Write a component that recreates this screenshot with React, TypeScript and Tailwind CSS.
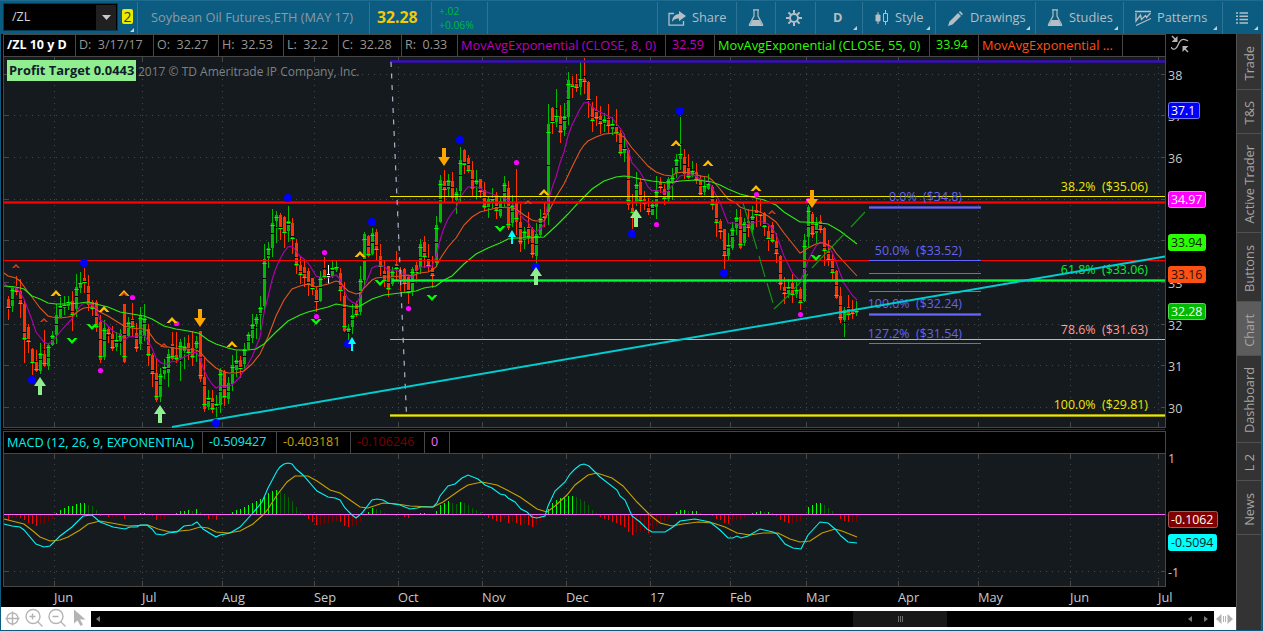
import type { ReactNode } from 'react';

// side, high, body top, body bottom, low (pixel rows), one candle every 4px
const CANDLES = `
r296,299,307,320 g286,288,306,312 r276,288,292,295 r279,291,304,318 r300,304,340,363 r324,327,342,353 r348,349,362,375 r350,361,371,372
g343,353,371,374 r330,354,366,367 g343,345,366,370 g331,335,345,346 g304,315,335,344 g297,306,317,318 g296,305,308,315 g296,302,306,310
r291,301,315,331 g274,287,309,317 g272,283,288,293 r268,278,282,293 r275,286,305,311 r300,302,308,316 r300,302,328,332 r315,322,360,363
g320,328,357,360 r326,329,333,343 r326,334,349,351 g332,340,347,351 g329,334,341,355 r304,304,362,363 g317,322,336,337 r303,319,327,336
r323,333,349,352 g307,315,344,350 g304,318,336,341 r324,329,356,366 r353,355,374,387 r358,373,400,402 g368,374,397,402 g359,367,374,379
g349,354,373,387 r332,344,359,360 r332,355,360,363 g339,342,358,381 g337,346,351,369 r335,343,353,360 r331,348,358,366 g336,341,348,362
r331,331,379,382 r358,377,409,412 g390,398,407,410 r390,398,410,413 g395,404,407,417 g368,370,405,413 r370,372,398,406 g377,383,399,404
g355,365,384,391 g351,360,370,377 r356,360,368,378 g343,349,364,369 g332,334,349,350 g314,324,338,343 g314,317,324,339 g296,307,315,330
g244,259,306,311 g242,248,258,268 g209,223,248,257 g211,215,221,243 r213,215,228,240 r216,217,232,248 g206,221,231,242 r218,223,238,254
r239,243,266,274 r257,265,275,284 r259,267,278,287 r268,271,284,296 r278,278,288,295 r287,290,301,312 g271,277,301,302 r257,270,278,279
w265,274,277,284 g261,268,276,278 g261,267,270,272 r268,273,291,301 r282,296,331,332 g324,328,333,340 g304,315,327,334 r301,304,315,317
g266,279,312,315 g232,234,280,285 r235,236,256,257 g228,233,254,255 r229,232,250,260 r244,256,267,276 r261,271,281,287 r266,266,290,297
g267,271,284,286 r251,264,269,280 r267,270,280,291 r268,269,284,292 r275,277,292,304 g267,269,291,296 r262,265,272,279 g239,244,267,274
r236,242,257,268 r244,258,267,271 r256,268,276,288 g216,225,263,267 g175,180,222,223 r170,181,190,202 g174,180,189,197 r172,181,198,202
g188,192,200,214 g147,160,191,202 r149,150,164,174 r155,158,171,173 r161,170,189,196 g170,180,184,199 r179,179,192,198 r182,190,208,211
g196,199,208,218 g188,199,202,208 r192,195,211,219 g198,201,216,218 g176,183,203,207 r181,188,228,230 g195,205,223,227 r169,202,222,235
r204,222,244,252 g227,231,240,249 r212,227,238,244 r227,229,255,258 g223,234,256,264 g209,218,235,237 r203,213,217,227 g104,124,212,225
r107,108,122,134 g89,118,122,127 r105,116,133,143 g103,116,130,136 g72,80,117,125 r76,84,86,98 r74,84,88,92 g62,79,87,95
r58,79,82,94 r81,82,99,118 r102,107,121,132 r96,110,119,126 r106,116,124,134 g113,119,123,132 r104,118,126,133 g117,124,129,135
r109,126,133,142 r130,133,154,156 g134,149,153,162 r148,150,205,210 r194,208,212,229 g172,184,202,206 r178,182,201,212 r191,199,203,210
r198,207,212,215 g200,204,215,215 g176,190,207,219 r177,182,188,193 r184,189,199,205 g177,179,199,203 g168,176,183,200 g154,159,173,178
g117,156,159,170 r149,157,174,179 r154,167,178,179 g161,172,176,177 r163,172,180,184 r175,179,195,195 g177,186,192,195 g174,184,189,190
r185,187,205,210 r199,202,223,237 r219,221,231,239 r229,229,256,270 g233,245,256,260 g222,228,248,250 g209,217,228,235 r209,217,248,249
g218,222,243,246 r209,221,228,237 g206,216,230,234 r198,210,214,227 r200,214,216,226 r212,213,227,236 r226,231,238,251 r222,225,242,243
r233,241,254,263 r255,256,285,290 r277,287,294,304 g279,287,294,298 r274,283,295,303 g282,290,294,298 r287,289,303,310 g234,240,301,302
g205,207,237,247 r212,214,235,238 g217,223,233,243 r215,221,230,233 r227,228,251,266 r240,251,260,266 r254,259,273,281 r270,271,298,299
r287,296,320,323 g307,310,320,337 r295,307,315,320 r300,310,314,319 g301,311,313,316`
  .trim()
  .split(/\s+/)
  .map((c) => ({ side: c[0], v: c.slice(1).split(',').map(Number) }));

const EMA8 =
  '4,283 8,287 16,288 20,292 24,299 32,320 36,332 40,337 44,342 48,344 52,342 60,332 68,323 72,319 76,313 80,306 84,303 88,303 92,305 96,308 100,320 104,322 108,326 112,330 116,333 120,334 124,340 128,337 136,336 144,335 148,341 152,348 156,358 160,362 164,364 168,364 172,361 176,362 180,359 188,355 196,352 200,358 204,370 208,378 212,384 216,388 220,386 224,387 232,385 236,381 240,377 244,370 248,364 252,357 256,347 260,337 264,313 268,297 272,280 276,268 280,259 284,252 288,247 292,246 296,251 300,256 304,259 308,263 312,269 316,276 320,277 328,278 336,275 340,279 344,290 348,299 352,302 356,304 360,297 364,287 368,278 372,268 376,266 384,266 388,270 396,270 400,272 408,276 412,277 416,272 420,267 424,267 432,266 436,257 440,240 444,228 448,219 452,213 456,208 460,198 464,192 468,187 472,187 476,187 480,188 484,191 492,194 500,197 504,198 508,200 512,203 516,209 520,215 524,219 528,222 532,229 536,232 540,229 544,225 548,202 552,188 556,177 560,163 564,152 568,136 572,125 576,117 580,109 584,103 588,102 592,107 596,110 600,112 604,114 608,116 612,118 616,123 620,128 624,134 628,149 632,163 636,167 640,172 644,179 648,187 652,191 656,190 660,191 664,193 668,191 672,186 676,181 680,176 684,175 692,175 696,176 700,179 704,181 708,181 712,187 716,195 720,202 724,213 728,223 736,223 740,226 744,226 748,224 752,223 760,221 768,224 772,228 776,234 780,245 784,256 788,264 792,272 796,277 800,281 804,273 808,261 812,253 816,246 820,242 824,243 828,246 832,252 836,262 840,273 844,283 848,289 852,295 857,300';

const EMA21 =
  '4,273 8,276 16,278 20,281 28,292 32,297 40,308 48,316 52,317 60,318 68,317 72,316 80,310 84,308 92,307 96,309 100,312 108,316 116,321 124,326 132,328 140,329 144,329 148,331 156,342 164,347 168,347 180,349 188,349 196,350 200,352 208,361 216,368 220,370 228,373 236,373 244,371 252,364 260,354 268,337 276,316 284,300 292,289 300,286 308,284 316,287 320,286 328,284 336,281 340,282 344,287 348,291 356,294 360,293 364,288 372,280 376,278 384,277 392,277 408,275 412,276 420,273 428,272 432,270 436,267 440,259 448,247 456,238 464,225 472,217 480,212 488,210 496,208 508,207 512,208 516,209 520,212 524,215 532,220 536,221 544,221 548,213 556,197 564,184 572,167 580,151 584,145 588,141 596,137 604,134 616,133 624,137 632,148 640,157 648,166 656,172 664,175 672,176 676,173 684,172 696,174 700,176 708,177 712,180 720,189 728,199 736,203 740,207 748,210 756,211 760,212 768,216 776,222 784,233 792,243 800,253 804,251 808,248 816,244 820,243 824,243 832,247 836,253 844,262 857,276';

const EMA55 =
  '4,286 16,287 24,289 32,296 40,299 48,303 56,304 68,304 80,303 88,302 96,304 108,307 120,312 132,314 144,316 152,319 164,326 176,329 188,331 198,333 200,334 208,340 216,344 228,348 236,350 248,350 256,349 264,344 276,332 288,321 300,315 308,312 316,310 328,307 336,304 348,306 356,307 360,306 372,299 384,295 400,293 416,291 424,288 436,286 444,280 452,276 464,264 476,254 488,248 500,243 508,239 516,238 528,238 544,237 556,226 568,214 580,201 592,189 604,181 616,177 624,176 632,177 640,179 652,181 668,183 680,181 696,180 712,182 720,185 728,189 740,194 752,197 764,200 776,205 784,212 792,217 800,222 804,222 820,223 828,224 840,231 857,244';

const MACD =
  '4,524 12,526 20,527 24,530 36,544 44,547 50,546 60,536 72,527 83,516 92,515 100,522 108,525 113,527 125,529 130,527 137,527 140,525 147,525 152,529 156,534 163,535 168,533 177,532 184,526 192,525 197,522 203,529 216,537 220,535 230,533 240,527 252,514 262,502 268,488 277,471 280,467 284,464 288,463 292,464 296,469 303,475 317,491 328,497 335,498 340,500 345,508 352,515 356,518 362,513 372,500 377,499 383,500 388,503 400,505 410,509 417,508 421,507 433,507 437,503 440,496 448,486 455,484 462,478 468,475 478,479 485,485 492,488 500,494 505,495 508,498 515,502 521,509 527,512 532,517 537,518 545,516 548,506 555,491 565,482 570,474 575,469 580,465 584,464 589,466 600,477 617,490 620,496 625,500 632,516 640,522 647,529 652,532 665,532 673,527 680,521 695,519 710,522 720,530 728,538 733,538 737,536 741,538 748,536 760,529 773,532 777,534 785,544 793,548 801,549 808,535 820,522 828,523 835,529 841,536 848,542 857,543';

const SIGNAL =
  '4,519 24,524 33,531 40,537 50,541 60,540 68,537 80,530 88,524 100,521 117,524 128,526 148,525 158,529 170,532 190,530 200,527 208,528 216,532 228,533 240,531 253,524 263,515 268,509 277,495 287,482 295,476 308,476 317,481 330,490 340,493 350,500 360,507 368,508 383,503 397,504 410,506 433,507 443,502 460,490 468,485 482,482 497,485 507,490 520,497 537,509 547,512 555,506 567,495 575,485 588,475 597,473 612,478 623,486 637,502 650,515 660,523 672,526 683,524 698,522 713,523 725,527 737,533 750,535 763,533 778,533 790,539 800,542 810,541 822,533 835,529 842,531 857,537';

const HISTOGRAM = [
  -5, -3, -2, -3, -5, -8, -9, -11, -9, -9, -6, -4, 1, 4, 6, 8, 8, 10, 11, 11, 9, 8, 4, -1, -1, -2, -2, -2, -1, -4, -1, 0, 0, 1, 1, 0, -1, -5,
  -4, -4, -1, 0, 1, 3, 3, 4, 3, 5, 2, -1, -4, -4, -5, -1, 0, 0, 2, 4, 5, 7, 9, 11, 13, 15, 17, 21, 23, 24, 22, 20, 17, 13, 7, 2, -1, -4, -7,
  -10, -10, -9, -8, -7, -6, -7, -11, -12, -11, -10, -6, -1, 2, 6, 5, 4, 1, 0, 0, -1, 0, -2, -3, -1, 0, 1, 1, 0, 0, 3, 9, 11, 13, 11, 10,
  12, 11, 9, 6, 4, 2, -1, -3, -4, -6, -7, -4, -8, -7, -8, -10, -9, -10, -12, -10, -6, -1, 5, 11, 14, 16, 17, 18, 18, 17, 15, 13, 9, 4, 1,
  -2, -4, -5, -7, -8, -10, -12, -17, -20, -18, -17, -16, -18, -14, -11, -9, -6, -4, -1, 2, 4, 4, 3, 3, 3, 1, 0, 0, -1, -4, -5, -8, -9, -6,
  -5, -5, -3, 0, 1, 2, 3, 2, 2, 1, -1, -5, -7, -8, -8, -7, -6, 0, 7, 9, 11, 11, 9, 6, 3, 0, -4, -6, -7, -7, -6,
];

const MONTHS: [string, number][] = [
  ['Jun', 54], ['Jul', 142], ['Aug', 222], ['Sep', 314], ['Oct', 398], ['Nov', 482], ['Dec', 566],
  ['17', 650], ['Feb', 730], ['Mar', 806], ['Apr', 898], ['May', 978], ['Jun', 1070], ['Jul', 1158],
];

const PRICES: [string, number][] = [
  ['38', 74], ['37', 115], ['36', 157], ['35', 199], ['34', 240], ['33', 282], ['32', 324], ['31', 365], ['30', 407],
];

const BLUE_DOTS = [[84, 263], [32, 380], [288, 198], [216, 423], [372, 222], [348, 344], [460, 140], [536, 267], [632, 234], [680, 111], [724, 273], [584, 54]];
const PINK_DOTS = [[132, 297], [100, 370], [176, 323], [324, 252], [316, 316], [408, 308], [516, 162], [656, 224], [756, 194], [808, 200], [800, 314]];
const GOLD_CARETS = [[56, 293], [124, 293], [104, 309], [172, 320], [232, 344], [360, 254], [544, 192], [676, 143], [708, 163], [756, 188]];
const RED_CARETS = [[16, 266], [44, 320], [124, 294], [164, 345], [528, 202], [772, 212]];
const GREEN_VEES = [[72, 341], [92, 327], [316, 322], [380, 283], [432, 298], [500, 229], [816, 258]];
const DOWN_ARROWS = [[200, 326], [444, 165], [812, 207]];
const UP_ARROWS = [[40, 377], [160, 405], [536, 267], [636, 209]];
const CYAN_ARROWS = [[352, 337], [512, 230]];

function Grid({ top, bottom, rows }: { top: number; bottom: number; rows: number[] }) {
  return (
    <g stroke="#474747" shapeRendering="crispEdges">
      <rect x={4} y={top} width={1161} height={bottom - top} fill="#151a1e" stroke="none" />
      {rows.map((y) => (
        <g key={y}>
          <path d={`M14 ${y + 0.5}H1160`} strokeDasharray="1 5" />
          <path d={`M4 ${y + 0.5}h5M1161 ${y + 0.5}h4`} />
        </g>
      ))}
      {MONTHS.map(([, x]) => (
        <g key={x}>
          <path d={`M${x + 0.5} ${top + 10}V${bottom - 6}`} strokeDasharray="1 5" />
          <path d={`M${x + 0.5} ${top}v5M${x + 0.5} ${bottom}v-5`} />
        </g>
      ))}
      <path d={`M3.5 ${top - 1}V${bottom + 0.5}H1165.5V${top - 1}`} fill="none" />
    </g>
  );
}

function Candle({ i, side, v }: { i: number; side: string; v: number[] }) {
  const x = 8 + i * 4;
  const [high, top, bottom, low] = v;
  const fill = side === 'g' ? '#00b900' : side === 'r' ? '#ff3200' : '#ffffff';
  const mid = Math.round((high + low) / 2);
  const close = side === 'g' ? top : bottom;
  const avg = Math.round(close + (mid - close) * 0.2);
  return (
    <g>
      <rect x={x} y={high} width={1} height={low - high} fill={fill} />
      <rect x={x - 1} y={top} width={3} height={bottom - top} fill={fill} />
      <rect x={x - 2} y={mid} width={5} height={1} fill="#000" fillOpacity={0.55} />
      <rect x={x - 1} y={mid} width={3} height={1} fill="#000" />
      {side !== 'w' && (
        <>
          <rect x={x - 2} y={avg} width={5} height={1} fill="#00b400" />
          <rect x={x - 1} y={avg} width={3} height={1} fill="#00ff00" />
        </>
      )}
    </g>
  );
}

function Level({ x1, x2, y, color, thick }: { x1: number; x2: number; y: number; color: string; thick?: boolean }) {
  return (
    <g fill={color} shapeRendering="crispEdges">
      {thick && <rect x={x1} y={y - 1} width={x2 - x1} height={3} fillOpacity={0.65} />}
      <rect x={x1} y={y} width={x2 - x1} height={1} />
    </g>
  );
}

function Tag({ y, w = 38, bg, border, color, children }: { y: number; w?: number; bg: string; border?: string; color: string; children: string }) {
  return (
    <g>
      <rect x={1168.5} y={y + 0.5} width={w - 1} height={16} rx={2} fill={bg} stroke={border ?? bg} />
      <text x={1171} y={y + 13} fill={color}>{children}</text>
    </g>
  );
}

function FibText({ x, y, color, children }: { x: number; y: number; color: string; children: string }) {
  return (
    <text x={x} y={y} fill={color} textAnchor="end" className="whitespace-pre text-[12.4px]">{children}</text>
  );
}

function PriceChart() {
  return (
    <svg className="block shrink-0 text-[12.3px]" width={1235} height={374} viewBox="1 57 1235 374">
      <Grid top={57} bottom={427} rows={PRICES.map(([, y]) => y)} />
      <path d="M3 429.5H1165" stroke="#2c2c2c" />
      <text x={138} y={76} fill="#7d8185" className="text-[12px]">2017 © TD Ameritrade IP Company, Inc.</text>
      <g shapeRendering="crispEdges">
        {CANDLES.map((c, i) => (
          <Candle key={i} i={i} side={c.side} v={c.v} />
        ))}
      </g>
      <g fill="none" strokeWidth={1.1}>
        <polyline points={EMA8} stroke="#b400b4" />
        <polyline points={EMA21} stroke="#e6551e" />
        <polyline points={EMA55} stroke="#2eeb0f" />
      </g>

      <Level x1={390} x2={1165} y={61} color="#3a0ad2" thick />
      <Level x1={390} x2={1165} y={196} color="#f0e600" />
      <Level x1={4} x2={1165} y={202} color="#ff0000" thick />
      <Level x1={4} x2={1165} y={260} color="#ff0000" />
      <Level x1={392} x2={1165} y={280} color="#00ff32" thick />
      <Level x1={390} x2={1165} y={339} color="#ff9b9b" />
      <Level x1={390} x2={1165} y={415} color="#f0e600" thick />
      <path d="M391 62L406.5 415" stroke="#aeb0cc" strokeWidth={1.2} strokeDasharray="5 6.5" />

      <path
        d="M743 203L757 249M759 256L765 277M767 283L773 303M774 309L791 293M794 289L808 274M812 268L845 233M851 227L865 212"
        stroke="#149614"
        strokeWidth={1.1}
      />

      <FibText x={962} y={201} color="#6464f0">{'0.0%  ($34.8)'}</FibText>
      <FibText x={962} y={255} color="#6464f0">{'50.0%  ($33.52)'}</FibText>
      <FibText x={962} y={308} color="#6464f0">{'100.0%  ($32.24)'}</FibText>
      <FibText x={962} y={338} color="#6464f0">{'127.2%  ($31.54)'}</FibText>
      <Level x1={869} x2={981} y={207} color="#6464ff" thick />
      <Level x1={869} x2={981} y={260} color="#6464ff" />
      <Level x1={869} x2={981} y={273} color="#6464ff" />
      <Level x1={869} x2={981} y={291} color="#6464ff" />
      <Level x1={869} x2={981} y={314} color="#6464ff" thick />
      <Level x1={869} x2={981} y={343} color="#6464ff" />
      <FibText x={1148} y={191} color="#f0e600">{'38.2%  ($35.06)'}</FibText>
      <FibText x={1148} y={274} color="#00f032">{'61.8%  ($33.06)'}</FibText>
      <FibText x={1148} y={334} color="#ff9b9b">{'78.6%  ($31.63)'}</FibText>
      <FibText x={1148} y={409} color="#f0e600">{'100.0%  ($29.81)'}</FibText>
      <path d="M172 427L1165 256.5" stroke="#00cdd0" strokeWidth={2} />

      <svg x={4} y={57} width={1161} height={370} viewBox="4 57 1161 370">
        {BLUE_DOTS.map(([x, y]) => (
          <circle key={x} cx={x} cy={y} r={4} fill="#0000ff" />
        ))}
      </svg>
      {PINK_DOTS.map(([x, y]) => (
        <circle key={x} cx={x + 0.5} cy={y + 0.5} r={2.6} fill="#ff00ff" />
      ))}
      {GOLD_CARETS.map(([x, y]) => (
        <path key={x} d={`M${x - 5.5} ${y + 3}L${x} ${y - 3}L${x + 5.5} ${y + 3}H${x + 2.5}L${x} ${y + 0.5}L${x - 2.5} ${y + 3}Z`} fill="#ffbe00" />
      ))}
      {RED_CARETS.map(([x, y]) => (
        <path key={x} d={`M${x - 4} ${y + 2}L${x} ${y - 2}L${x + 4} ${y + 2}H${x + 2}L${x} ${y}L${x - 2} ${y + 2}Z`} fill="#e63c14" />
      ))}
      {GREEN_VEES.map(([x, y]) => (
        <path key={x} d={`M${x - 5.5} ${y - 3}H${x - 2.5}L${x} ${y - 0.5}L${x + 2.5} ${y - 3}H${x + 5.5}L${x} ${y + 3}Z`} fill="#00ff00" />
      ))}
      {DOWN_ARROWS.map(([x, y]) => (
        <path key={x} d={`M${x - 2} ${y - 17}h4v9h4l-6 9l-6 -9h4Z`} fill="#ffa500" />
      ))}
      {UP_ARROWS.map(([x, y]) => (
        <path key={x} d={`M${x - 2} ${y + 18}h4v-9h4l-6 -9l-6 9h4Z`} fill="#90ee90" />
      ))}
      {CYAN_ARROWS.map(([x, y]) => (
        <path key={x} d={`M${x - 1} ${y + 14}h2v-7h3l-4 -7l-4 7h3Z`} fill="#00ffff" />
      ))}

      <rect x={7} y={60} width={129} height={21} fill="#90ee90" />
      <text x={9} y={75} fill="#10202a" className="text-[12.9px] font-bold">Profit Target 0.0443</text>

      {PRICES.map(([label, y]) => (
        <text key={label} x={1168} y={y + 6} fill="#c8c8c8" className="text-[12.5px]">{label}</text>
      ))}
      <Tag y={102} w={32} bg="#0000ff" border="#7878ff" color="#fff">37.1</Tag>
      <Tag y={191} bg="#ff00ff" border="#ff78ff" color="#fff">34.97</Tag>
      <Tag y={234} bg="#2aff00" color="#0a1e0a">33.94</Tag>
      <Tag y={266} bg="#ff5014" color="#281008">33.16</Tag>
      <Tag y={303} bg="#00b900" border="#50dc50" color="#fff">32.28</Tag>
    </svg>
  );
}

function MacdChart() {
  return (
    <svg className="block shrink-0 text-[12.5px]" width={1235} height={153} viewBox="1 454 1235 153">
      <Grid top={454} bottom={586} rows={[571]} />
      <g shapeRendering="crispEdges">
        {HISTOGRAM.map((h, i) => {
          const rising = h >= (HISTOGRAM[i - 1] ?? 0);
          const fill = h > 0 ? (rising ? '#00ff00' : '#006400') : rising ? '#7d0000' : '#ff0000';
          return <rect key={i} x={8 + i * 4} y={h > 0 ? 514 - h : 515} width={1} height={Math.abs(h)} fill={fill} />;
        })}
        <rect x={4} y={514} width={1161} height={1} fill="#ff64ff" />
      </g>
      <polyline points={SIGNAL} fill="none" stroke="#c8a000" strokeWidth={1.1} />
      <polyline points={MACD} fill="none" stroke="#00f5f5" strokeWidth={1.1} />
      <g fill="#c8c8c8">
        <text x={1168} y={463}>1</text>
        <text x={1168} y={577}>-1</text>
        {MONTHS.map(([label, x]) => (
          <text key={x} x={x} y={602} className="text-[12.8px]">{label}</text>
        ))}
      </g>
      <g className="text-[12.3px]">
        <Tag y={511} w={50} bg="#800000" border="#aa5a5a" color="#fff">-0.1062</Tag>
        <Tag y={534} w={49} bg="#00ffff" color="#001e1e">-0.5094</Tag>
      </g>
    </svg>
  );
}

function Cell({ className, children }: { className: string; children?: ReactNode }) {
  return (
    <div className={`flex shrink-0 items-center overflow-hidden whitespace-pre border-r border-[#474747] pl-[3px] ${className}`}>{children}</div>
  );
}

function FlaskIcon() {
  return (
    <svg width="16" height="18" viewBox="0 0 16 18" fill="none" stroke="#b4bec4">
      <path d="M5 .8h6M6 1v6L1.5 15.5v1h13v-1L10 7V1" strokeWidth="1.2" />
      <path d="M4.5 11h7l3 6h-13Z" fill="#b4bec4" stroke="none" />
    </svg>
  );
}

function ShareIcon() {
  return (
    <svg width="18" height="15" viewBox="0 0 18 15">
      <path d="M6 2.5H1v11.7h14.5V10" fill="none" stroke="#b4bec4" strokeWidth="1.3" />
      <path d="M11 0l7 5-7 5.2V7.5C7.5 7.3 5.5 8.5 4 11c.2-4.5 2.5-7.5 7-8Z" fill="#b4bec4" />
    </svg>
  );
}

function GearIcon() {
  return (
    <svg width="16" height="16" viewBox="-8 -8 16 16" fill="none" stroke="#b4bec4">
      <circle r="4" strokeWidth="2" />
      <path d="M0-8v3.5M0 8V4.500M-8 0h3.5M8 0H4.5M-5.6-5.6l2.4 2.4M5.6 5.6 3.2 3.2M-5.6 5.6l2.4-2.4M5.6-5.6 3.2-3.2" strokeWidth="2" />
    </svg>
  );
}

function CandleIcon() {
  return (
    <svg width="14" height="16" viewBox="0 0 14 16" stroke="#b4bec4">
      <path d="M3 2v12M10.5 0v3M10.5 12v3" />
      <path d="M1 5h4v6H1Z" fill="#b4bec4" />
      <path d="M8.5 3.5h4v8h-4Z" fill="none" />
    </svg>
  );
}

function PencilIcon() {
  return (
    <svg width="15" height="15" viewBox="0 0 15 15" fill="#b4bec4">
      <path d="M0 15l1.5-4.500L10 2l3 3-8.500 8.500ZM10.800 1.200 12 0l3 3-1.200 1.200Z" />
    </svg>
  );
}

function PatternIcon() {
  return (
    <svg width="17" height="17" viewBox="0 0 17 17" fill="none" stroke="#b4bec4" strokeWidth="1.3">
      <path d="M0 1.500h16M1 15.500 16 8.500M1 3v8l4.500-6 1 4.500 4-4 1 2L15.500 3" />
    </svg>
  );
}

function ListIcon() {
  return (
    <svg width="12" height="12" viewBox="0 0 12 12" stroke="#b4bec4" strokeWidth="1.5">
      <path d="M0 1h2M3.5 1H12M0 4.300h2M3.5 4.300H12M0 7.600h2M3.5 7.600H12M0 10.900h2M3.5 10.900H12" />
    </svg>
  );
}

function Tool({ className, menu, children }: { className: string; menu?: boolean; children?: ReactNode }) {
  return (
    <div className={`relative flex shrink-0 items-center border-l border-[#2b7496] text-[#b4bec4] ${className}`}>
      {children}
      {menu && (
        <svg className="absolute right-[5px] bottom-[4px]" width="4" height="4" viewBox="0 0 4 4">
          <path d="M4 0v4H0Z" fill="#c8d0d4" />
        </svg>
      )}
    </div>
  );
}

function Toolbar() {
  return (
    <div className="flex h-[34px] shrink-0 border-t border-[#1d6c90] bg-[#0b5c80] pt-px text-[12.8px]">
      <div className="ml-[3px] mt-px flex h-[28px] w-[115px] items-center justify-between border border-[#033a54] bg-black pr-px">
        <span className="pl-2 text-[12.5px] text-[#d2d2d2]">/ZL</span>
        <div className="flex h-[25px] w-[20px] items-center justify-center bg-[#202020]">
          <svg width="9" height="5" viewBox="0 0 9 5"><path d="M0 0h9L4.5 5Z" fill="#c8c8c8" /></svg>
        </div>
      </div>
      <div className="relative w-[19px] pl-[4px] pt-[7px]">
        <div className="flex h-[15px] w-[11px] items-center justify-center rounded-[2px] bg-[#ebeb00] text-[14px] text-[#3c3c00]">2</div>
        <svg className="absolute right-[3px] bottom-[2px]" width="4" height="4" viewBox="0 0 4 4"><path d="M4 0v4H0Z" fill="#c8d0d4" /></svg>
      </div>
      <Tool className="w-[232px] pl-[13px]"><span className="whitespace-nowrap text-[#8c9aa2]">Soybean Oil Futures,ETH (MAY 17)</span></Tool>
      <Tool className="w-[62px] pl-[7px]"><span className="text-[15.8px] font-bold text-[#f5c800]">32.28</span></Tool>
      <Tool className="w-[56px] pl-[7px]">
        <div className="text-[10.3px] leading-[14px] text-[#00b93c]">+.02<br />+0.06%</div>
      </Tool>
      <Tool className="w-[170px]" />
      <Tool className="w-[79px] gap-[6px] pl-[10px]"><ShareIcon />Share</Tool>
      <Tool className="w-[39px] justify-center"><FlaskIcon /></Tool>
      <Tool className="w-[40px] pl-[10px]"><GearIcon /></Tool>
      <Tool className="w-[47px] pl-[17px] font-bold" menu>D</Tool>
      <Tool className="w-[73px] gap-[6px] pl-[12px]" menu><CandleIcon />Style</Tool>
      <Tool className="w-[100px] gap-[7px] pl-[12px]" menu><PencilIcon />Drawings</Tool>
      <Tool className="w-[88px] gap-[6px] pl-[11px]" menu><FlaskIcon />Studies</Tool>
      <Tool className="w-[99px] gap-[5px] pl-[11px]" menu><PatternIcon />Patterns</Tool>
      <Tool className="w-[41px] pl-[13px]" menu><ListIcon /></Tool>
    </div>
  );
}

function StudyHeader() {
  return (
    <div className="flex h-[23px] shrink-0 bg-black pl-[2px] text-[12.5px] text-[#969696]">
      <div className="flex w-[1163px] border-y border-l border-[#474747]">
        <Cell className="w-[72px] font-bold text-white">/ZL 10 y D</Cell>
        <Cell className="w-[78px]">{'D:  3/17/17'}</Cell>
        <Cell className="w-[65px]">{'O:  32.27'}</Cell>
        <Cell className="w-[65px]">{'H:  32.53'}</Cell>
        <Cell className="w-[55px]">{'L:  32.2'}</Cell>
        <Cell className="w-[63px]">{'C:  32.28'}</Cell>
        <Cell className="w-[56px]">{'R:  0.33'}</Cell>
        <Cell className="w-[208px] text-[12.8px] text-[#be00be]">MovAvgExponential (CLOSE, 8, 0)</Cell>
        <Cell className="w-[49px] pl-[6px] text-[#be00be]">32.59</Cell>
        <Cell className="w-[215px] text-[12.8px] text-[#2aff00]">MovAvgExponential (CLOSE, 55, 0)</Cell>
        <Cell className="w-[49px] pl-[6px] text-[#2aff00]">33.94</Cell>
        <Cell className="w-[144px] text-[12.8px] text-[#ff5014]">MovAvgExponential ...</Cell>
        <Cell className="flex-1" />
      </div>
      <svg className="ml-[5px] mt-px" width="18" height="18" viewBox="0 0 18 18" fill="none" stroke="#b4b4b4">
        <path d="M0 12c2.500 4 5.500 2 7-2s4-8 10-4" strokeWidth="1.3" />
        <path d="M1 1l4 4M17 17l-4-4" strokeWidth="1.5" />
        <path d="M6.5 1v6h-6ZM11.500 17v-6h6Z" fill="#b4b4b4" stroke="none" />
      </svg>
    </div>
  );
}

function MacdHeader() {
  return (
    <div className="flex h-[23px] shrink-0 bg-black pl-[2px] text-[12.5px]">
      <div className="flex w-[1163px] border-y border-l border-[#474747]">
        <Cell className="w-[199px] text-[12.7px] text-[#00f0f0]">MACD (12, 26, 9, EXPONENTIAL)</Cell>
        <Cell className="w-[74px] pl-[6px] text-[#00f0f0]">-0.509427</Cell>
        <Cell className="w-[74px] pl-[6px] text-[#c8a000]">-0.403181</Cell>
        <Cell className="w-[74px] pl-[6px] text-[#780000]">-0.106246</Cell>
        <Cell className="w-[25px] pl-[6px] text-[#ff64ff]">0</Cell>
        <Cell className="flex-1" />
      </div>
    </div>
  );
}

function ScrollBar() {
  return (
    <div className="flex h-[23px] shrink-0 items-center bg-white">
      <svg className="ml-[4px] shrink-0" width="86" height="21" viewBox="5 608 86 21" fill="none" stroke="#b4b4b4" strokeWidth="1.4">
        <circle cx="12.5" cy="618.5" r="5.5" />
        <path d="M5.5 618.5h14M12.5 611.5v14" />
        <circle cx="33" cy="616.5" r="7" />
        <path d="M29.5 616.5h6M32.5 613.5v6M37.5 621.5l5 5" />
        <circle cx="56" cy="616.5" r="7" />
        <path d="M52.5 616.5h6M60.5 621.5l5 5" />
        <path d="M74 609.5v14l3.5-3 3 5.5 2.5-1.5-3-5h5.5Z" fill="#b4b4b4" stroke="none" />
      </svg>
      <div className="flex h-[16px] w-[1123px] shrink-0 items-center bg-black">
        <svg className="ml-[5px]" width="4" height="6" viewBox="0 0 4 6"><path d="M4 0v6L0 3Z" fill="#787878" /></svg>
        <div className="ml-[753px] flex h-full w-[94px] items-center justify-center gap-px bg-[#181818]">
          <div className="h-[6px] w-px bg-[#6e6e6e]" />
          <div className="h-[6px] w-px bg-[#6e6e6e]" />
          <div className="h-[6px] w-px bg-[#6e6e6e]" />
        </div>
        <svg className="ml-[241px]" width="4" height="6" viewBox="0 0 4 6"><path d="M4 0v6L0 3Z" fill="#787878" /></svg>
        <svg className="ml-[12px]" width="4" height="6" viewBox="0 0 4 6"><path d="M0 0v6l4-3Z" fill="#787878" /></svg>
      </div>
      <svg className="ml-[2px]" width="17" height="10" viewBox="0 0 17 10" fill="#b4b4b4">
        <path d="M5.5 0v10L0 5ZM11.500 0v10L17 5ZM7 2h1v6H7ZM9 2h1v6H9Z" />
      </svg>
    </div>
  );
}

const TABS = [
  { label: 'Trade', className: 'h-[56px] bg-[#333]' },
  { label: 'T&S', className: 'h-[44px] bg-[#333]' },
  { label: 'Active Trader', className: 'h-[99px] bg-[#333]' },
  { label: 'Buttons', className: 'h-[69px] bg-[#333]' },
  { label: 'Chart', className: 'h-[54px] bg-[#5c5c5c]' },
  { label: 'Dashboard', className: 'h-[87px] bg-[#333]' },
  { label: 'L 2', className: 'h-[38px] bg-[#333]' },
  { label: 'News', className: 'h-[54px] bg-[#333]' },
];

function Sidebar() {
  return (
    <div className="flex w-[26px] shrink-0 flex-col border-l border-r border-[#505050] bg-[#333] text-[12.8px] text-[#a5a5a5]">
      {TABS.map((tab) => (
        <div key={tab.label} className={`flex shrink-0 items-center justify-center border-b border-[#505050] pt-[3px] pl-px ${tab.className}`}>
          <span className="rotate-180 whitespace-nowrap [writing-mode:vertical-rl]">{tab.label}</span>
        </div>
      ))}
    </div>
  );
}

export default function App() {
  return (
    <div className="flex h-[631px] w-[1263px] flex-col overflow-hidden bg-[#0b5c80] font-['Open_Sans','Noto_Sans',sans-serif]">
      <Toolbar />
      <div className="flex h-[596px] pl-px">
        <div className="flex w-[1235px] shrink-0 flex-col bg-black">
          <StudyHeader />
          <PriceChart />
          <MacdHeader />
          <MacdChart />
          <ScrollBar />
        </div>
        <Sidebar />
      </div>
    </div>
  );
}
